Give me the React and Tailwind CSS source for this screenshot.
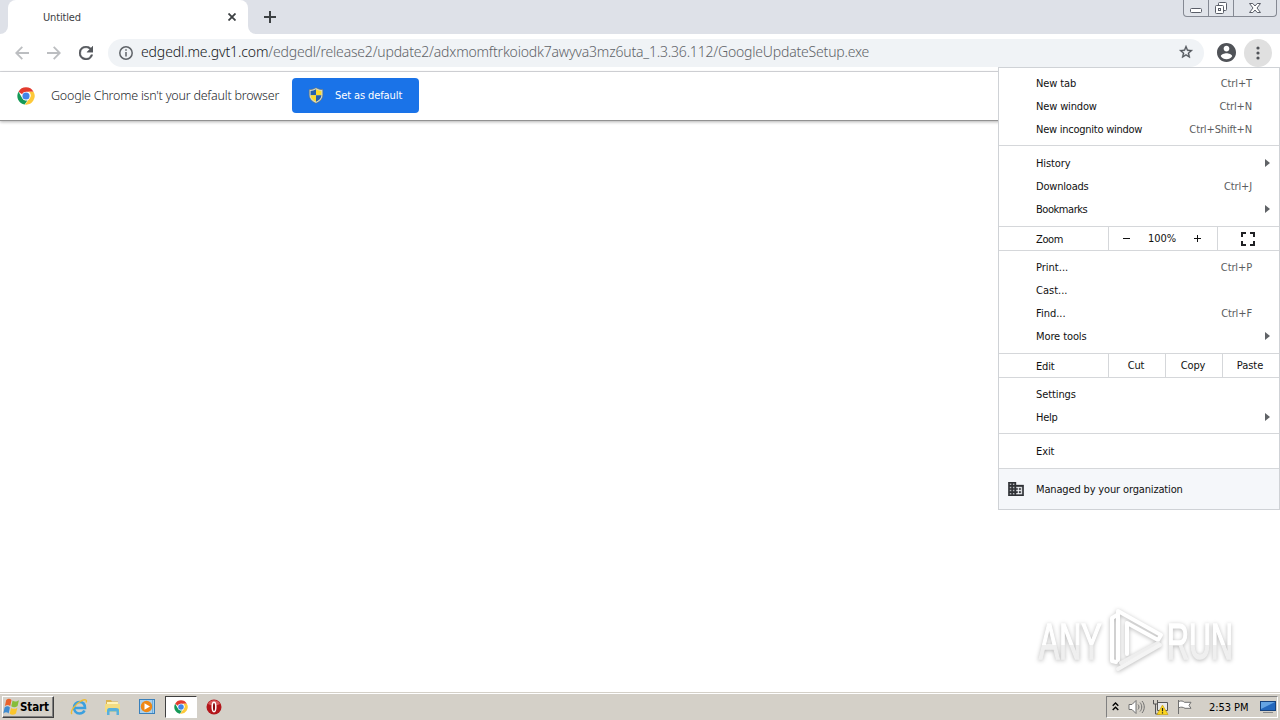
import React from 'react';

const Divider = () => <div className="h-px shrink-0 bg-[#d5d7da]" />;

const MenuItem = ({ label, shortcut, submenu, spacing = 'tracking-[-0.25px]' }) => (
  <div className="flex h-[23px] items-center pl-[37px] pr-[9px]">
    <span className={`flex-1 text-[#111] ${spacing}`}>{label}</span>
    {shortcut && <span className="mr-[18px] tracking-[-0.12px] text-[#5b5d60]">{shortcut}</span>}
    {submenu && (
      <svg className="mb-px" width="5" height="8" viewBox="0 0 5 8" fill="#606367">
        <path d="M0 0 5 4 0 8z" />
      </svg>
    )}
  </div>
);

const ChromeLogo = ({ size }) => (
  <svg width={size} height={size} viewBox="0 0 48 48">
    <circle cx="24" cy="24" r="23" fill="#fff" />
    <path d="M4 12.500A23 23 0 0 1 44 12.500H24a11.500 11.500 0 0 0-10.500 7z" fill="#e33b2e" />
    <path d="M4 12.500 14 30a11.500 11.500 0 0 0 14 5l-7.500 11.800A23 23 0 0 1 4 12.500z" fill="#159957" />
    <path d="M44 12.500A23 23 0 0 1 21 46.800L34 30a11.500 11.500 0 0 0-3-17.500z" fill="#fdc93a" />
    <circle cx="24" cy="24" r="11" fill="#fff" />
    <circle cx="24" cy="24" r="9.500" fill="#4285e8" />
  </svg>
);

const ShieldIcon = () => (
  <svg width="16" height="17" viewBox="0 0 16 17">
    <path d="M8 .7C6 2 3.500 2.600 1.200 2.600v5.200c0 4 3 7 6.800 8.500 3.800-1.500 6.800-4.500 6.800-8.500V2.600C12.500 2.600 10 2 8 .7z" fill="#d8dcc8" stroke="#696f66" strokeWidth=".6" />
    <path d="M8 2.300C6.300 3.300 4.500 3.800 2.600 4v4.200H8z" fill="#245fae" />
    <path d="M8 2.300c1.700 1 3.500 1.500 5.400 1.700v4.200H8z" fill="#fad92f" />
    <path d="M2.600 8.200H8v6.500c-3-1.300-5.200-3.400-5.400-6.500z" fill="#fad92f" />
    <path d="M13.400 8.200H8v6.500c3-1.300 5.200-3.400 5.400-6.500z" fill="#245fae" />
  </svg>
);

const TabStrip = () => (
  <div className="flex h-[34px] items-start bg-[#dee1e8]">
    <div className="h-[34px] w-2 bg-white">
      <div className="h-full rounded-br-lg bg-[#dee1e8]" />
    </div>
    <div className="flex h-[34px] w-[240px] items-center rounded-t-lg bg-white pl-[35px] pr-3">
      <span className="flex-1 pt-0.5 text-[11px] tracking-[-0.17px] text-[#3c4043]">Untitled</span>
      <svg width="8" height="8" viewBox="0 0 8 8" stroke="#3c4043" strokeWidth="1.800">
        <path d="M.5.5l7 7M7.500.5l-7 7" />
      </svg>
    </div>
    <div className="h-[34px] w-2 bg-white">
      <div className="h-full rounded-bl-lg bg-[#dee1e8]" />
    </div>
    <svg className="ml-[7px] mt-[10px]" width="14" height="14" viewBox="0 0 14 14" stroke="#3c4043" strokeWidth="2">
      <path d="M7 1v12M1 7h12" />
    </svg>
    <div className="ml-auto mr-[3px] flex h-[17px] w-[94px] rounded-b-[4px] border border-t-0 border-[#858993] bg-[#e1e4ea]">
      <div className="flex w-[25px] justify-center border-r border-[#858993]">
        <svg width="24" height="16" viewBox="0 0 24 16" fill="#fff" stroke="#5a5e68">
          <rect x="6.500" y="8.500" width="11" height="4" rx="1" />
        </svg>
      </div>
      <div className="flex w-[25px] justify-center border-r border-[#858993]">
        <svg width="24" height="16" viewBox="0 0 24 16" fill="#fff" stroke="#5a5e68">
          <rect x="9.500" y="2.500" width="8" height="8" rx="1" />
          <rect x="6.500" y="5.500" width="8" height="8" rx="1" />
          <rect x="9.500" y="8.500" width="2" height="2" />
        </svg>
      </div>
      <div className="flex flex-1 justify-center">
        <svg width="24" height="16" viewBox="0 0 24 16" fill="#fff" stroke="#5a5e68">
          <path d="M6.500 3.500h3.300L12 6l2.200-2.500h3.300L14 8l3.500 4.500h-3.300L12 10l-2.200 2.500H6.500L10 8z" />
        </svg>
      </div>
    </div>
  </div>
);

const Toolbar = () => (
  <div className="flex h-[38px] items-center border-b border-[#d8dade] bg-white pl-[15px] pr-2">
    <svg width="14" height="14" viewBox="0 0 14 14" fill="none" stroke="#bcbec1" strokeWidth="1.800">
      <path d="M14 7H1.500M7.300.8 1.200 7l6.100 6.200" />
    </svg>
    <svg className="ml-[18px]" width="14" height="14" viewBox="0 0 14 14" fill="none" stroke="#bcbec1" strokeWidth="1.800">
      <path d="M0 7h12.500M6.700.8 12.800 7l-6.100 6.200" />
    </svg>
    <svg className="ml-[18px]" width="14" height="14" viewBox="4 4 16 16" fill="#55585d" stroke="#55585d" strokeWidth=".5">
      <path d="M17.650 6.350A7.950 7.950 0 0 0 12 4a8 8 0 1 0 7.730 10h-2.080A6 6 0 1 1 12 6c1.660 0 3.140.69 4.220 1.780L13 11h7V4z" />
    </svg>
    <div className="ml-[15px] flex h-7 w-[1096px] items-center rounded-full bg-[#f0f3f6] pl-[11px] pr-[10px]">
      <svg width="14" height="14" viewBox="0 0 14 14" fill="none" stroke="#5f6368" strokeWidth="1.500">
        <circle cx="7" cy="7" r="6.200" />
        <path d="M7 6v4.500M7 3.300v1.500" />
      </svg>
      <span className="ml-2 flex-1 whitespace-nowrap pb-0.5 font-['Noto_Sans','Open_Sans',sans-serif] text-[14px] font-light text-[#5f6368]">
        <span className="tracking-[-0.12px] text-[#15181b]">edgedl.me.gvt1.com</span>
        <span className="tracking-[-0.19px]">/edgedl/release2/update2/adxmomftrkoiodk7awyva3mz6uta_1.3.36.112/GoogleUpdateSetup.exe</span>
      </span>
      <svg className="mb-0.5" width="16" height="16" viewBox="0 0 24 24" fill="#50545a" stroke="#50545a" strokeWidth=".5">
        <path d="M22 9.240l-7.190-.62L12 2 9.190 8.630 2 9.240l5.460 4.730L5.820 21 12 17.270 18.180 21l-1.630-7.030L22 9.240zM12 15.400l-3.760 2.270 1-4.280-3.320-2.880 4.380-.38L12 6.100l1.710 4.040 4.380.38-3.320 2.880 1 4.280L12 15.400z" />
      </svg>
    </div>
    <svg className="ml-[12.5px]" width="19" height="19" viewBox="2 2 20 20" fill="#505358">
      <path d="M12 2C6.480 2 2 6.480 2 12s4.480 10 10 10 10-4.480 10-10S17.520 2 12 2zm0 3c1.660 0 3 1.340 3 3s-1.340 3-3 3-3-1.340-3-3 1.340-3 3-3zm0 14.200c-2.500 0-4.710-1.280-6-3.220.03-1.990 4-3.080 6-3.080s5.970 1.090 6 3.080c-1.290 1.940-3.500 3.220-6 3.220z" />
    </svg>
    <div className="ml-[8.5px] flex size-7 items-center justify-center rounded-full bg-[#e0e0e0]">
      <svg width="4" height="14" viewBox="0 0 4 14" fill="#505358">
        <circle cx="2" cy="2" r="1.600" />
        <circle cx="2" cy="7" r="1.600" />
        <circle cx="2" cy="12" r="1.600" />
      </svg>
    </div>
  </div>
);

const InfoBar = () => (
  <div className="flex h-[49px] items-center border-b border-[#929292] bg-white pb-px pl-[17px] shadow-[0_1px_3px_rgba(0,0,0,0.3)]">
    <ChromeLogo size={18} />
    <span className="ml-4 w-[241px] whitespace-nowrap pt-0.5 font-['Noto_Sans','Open_Sans',sans-serif] text-[12.5px] font-light tracking-[-0.22px] text-[#25282b]">
      Google Chrome isn't your default browser
    </span>
    <button className="flex h-[35px] w-[127px] items-center rounded-[4px] bg-[#1a73e8] pl-4 text-[11px] tracking-[-0.1px] text-white">
      <ShieldIcon />
      <span className="ml-[11px] whitespace-nowrap pt-0.5">Set as default</span>
    </button>
  </div>
);

const ChromeMenu = () => (
  <div className="absolute left-[998px] top-[67px] flex h-[443px] w-[282px] flex-col border border-[#cfd2d6] bg-white text-[11px] leading-none">
    <div className="pb-1 pt-1">
      <MenuItem label="New tab" shortcut="Ctrl+T" spacing="tracking-[-0.1px]" />
      <MenuItem label="New window" shortcut="Ctrl+N" spacing="tracking-[-0.15px]" />
      <MenuItem label="New incognito window" shortcut="Ctrl+Shift+N" />
    </div>
    <Divider />
    <div className="pb-[5px] pt-[6px]">
      <MenuItem label="History" submenu spacing="tracking-[-0.1px]" />
      <MenuItem label="Downloads" shortcut="Ctrl+J" spacing="tracking-[-0.2px]" />
      <MenuItem label="Bookmarks" submenu spacing="tracking-[-0.45px]" />
    </div>
    <Divider />
    <div className="flex h-[23px] items-stretch text-[#111]">
      <div className="flex w-[109px] items-center pl-[37px] pt-0.5 tracking-[-0.4px]">Zoom</div>
      <div className="flex w-[109px] items-center border-l border-[#d5d7da] pl-[14px]">
        <svg width="8" height="8" viewBox="0 0 8 8" stroke="#111">
          <path d="M0 3.500h7" />
        </svg>
        <span className="w-[62px] text-center tracking-[-0.1px]">100%</span>
        <svg width="9" height="8" viewBox="0 0 9 8" stroke="#111">
          <path d="M1 3.500h7M4.500 0v7" />
        </svg>
      </div>
      <div className="flex flex-1 items-center justify-center border-l border-[#d5d7da] pr-0.5">
        <svg width="14" height="14" viewBox="0 0 14 14" fill="none" stroke="#202124" strokeWidth="2">
          <path d="M1 5V1h4M9 1h4v4M13 9v4H9M5 13H1V9" />
        </svg>
      </div>
    </div>
    <Divider />
    <div className="pb-[5px] pt-[5px]">
      <MenuItem label="Print..." shortcut="Ctrl+P" spacing="tracking-[0px]" />
      <MenuItem label="Cast..." spacing="tracking-[0px]" />
      <MenuItem label="Find..." shortcut="Ctrl+F" spacing="tracking-[0px]" />
      <MenuItem label="More tools" submenu spacing="tracking-[-0.1px]" />
    </div>
    <Divider />
    <div className="flex h-[23px] tracking-[-0.2px] text-[#111]">
      <div className="flex w-[109px] items-center pl-[37px] pt-0.5">Edit</div>
      <div className="flex w-[57px] items-center justify-center border-l border-[#d5d7da] pr-0.5">Cut</div>
      <div className="flex w-[57px] items-center justify-center border-l border-[#d5d7da] pr-0.5">Copy</div>
      <div className="flex flex-1 items-center justify-center border-l border-[#d5d7da] pr-0.5 tracking-[0px]">Paste</div>
    </div>
    <Divider />
    <div className="pb-1 pt-[5px]">
      <MenuItem label="Settings" spacing="tracking-[-0.1px]" />
      <MenuItem label="Help" submenu />
    </div>
    <Divider />
    <div className="pb-[5px] pt-[6px]">
      <MenuItem label="Exit" spacing="tracking-[-0.1px]" />
    </div>
    <Divider />
    <div className="flex flex-1 items-center bg-[#f5f7fa] pl-[9px] text-[#111]">
      <svg width="16" height="14" viewBox="2 3 20 18" fill="#303236" stroke="#303236" strokeWidth=".5">
        <path d="M12 7V3H2v18h20V7H12zM6 19H4v-2h2v2zm0-4H4v-2h2v2zm0-4H4V9h2v2zm0-4H4V5h2v2zm4 12H8v-2h2v2zm0-4H8v-2h2v2zm0-4H8V9h2v2zm0-4H8V5h2v2zm10 12h-8v-2h2v-2h-2v-2h2v-2h-2V9h8v10zm-2-8h-2v2h2v-2zm0 4h-2v2h2v-2z" />
      </svg>
      <span className="ml-3 tracking-[-0.15px]">Managed by your organization</span>
    </div>
  </div>
);

const Watermark = () => (
  <svg className="absolute left-[1030px] top-[600px] [filter:drop-shadow(0_1px_2px_rgba(0,0,0,0.28))]" width="240" height="84" viewBox="-4 -4 240 84">
    <defs>
      <linearGradient id="fade" x1="0" y1="0" x2="0" y2="1">
        <stop offset="0.55" stopColor="#fff" />
        <stop offset="0.55" stopColor="#efefef" />
      </linearGradient>
    </defs>
    <g fill="url(#fade)" stroke="url(#fade)" strokeWidth="1.500" fontFamily="Liberation Sans, sans-serif" fontSize="50">
      <text transform="translate(5 55) scale(0.61 1)">ANY</text>
      <text transform="translate(133 55) scale(0.61 1)">RUN</text>
    </g>
    <g fill="none" stroke="#fff" strokeWidth="4" strokeLinejoin="round" strokeLinecap="round">
      <path d="M83 11l-5 3v43l4 1" />
      <path d="M84 56V7l43 24-3 5-31-17v31" />
      <path d="M87 59l37-20" stroke="#eee" />
      <path d="M84 65l42-24" stroke="#f4f4f4" />
    </g>
  </svg>
);

const StartButton = () => (
  <div className="flex h-[22px] w-[52px] items-center border border-b-[#404040] border-l-white border-r-[#404040] border-t-white bg-[#d4d0c8] shadow-[inset_-1px_-1px_0_#808080]">
    <svg width="17" height="18" viewBox="0 1 16 14" preserveAspectRatio="none">
      <path d="M3 2.500c2-1.300 3.500-1 5 0L6.800 7.200c-1.500-1-3-1.200-5 0z" fill="#e9622b" />
      <path d="M9 3c2 1 3.500 1 6-.3L13.700 7.300c-2 1.200-4 1.200-5.900.2z" fill="#86bd3b" />
      <path d="M1.500 8.300c2-1.200 3.500-1 5 0L5.300 13c-1.500-1-3-1.200-5 0z" fill="#3e8bd0" />
      <path d="M7.600 8.700c2 1 3.800 1 5.900-.2L12.200 13c-2 1.300-4 1.300-5.900.3z" fill="#fbc62c" />
    </svg>
    <span className="pt-0.5 text-[11.5px] font-bold leading-none tracking-[-0.1px] text-black">Start</span>
  </div>
);

const Taskbar = () => (
  <div className="flex h-[28px] items-center border-t border-[#d4d0c8] bg-[#d4d0c8] pl-0.5 pt-px shadow-[inset_0_1px_0_#fff]">
    <StartButton />
    <svg className="ml-4" width="18" height="18" viewBox="0 0 18 18" fill="none">
      <path d="M14.500 12.500c-1 2-3 3-5 3-3.500 0-5.500-2.700-5.500-5.800C4 6.500 6.300 4 9.500 4 13 4 15 6.300 15 10H5" stroke="#3ba0df" strokeWidth="2.600" />
      <path d="M2 16C-.5 13.500 5.500 6 11 3c4-2 6.500-1.500 5 1.500" stroke="#eebc35" strokeWidth="1.400" />
    </svg>
    <svg className="ml-[16px]" width="18" height="18" viewBox="0 0 18 18">
      <path d="M2 2h5l1 1.500h6V14H2z" fill="#dcb450" />
      <path d="M3 4h11v3H3z" fill="#fff3b8" />
      <path d="M1 6h15v8H1z" fill="#f3dc82" />
      <path d="M3 17v-4.500C3 10.500 4.500 10 6 10h6c2 0 3 .7 3 2.500V17h-2.500v-3.500h-7V17z" fill="#57b0dc" />
    </svg>
    <svg className="ml-[16px]" width="18" height="18" viewBox="0 0 18 18">
      <rect x="1.500" y="1.500" width="15" height="14" fill="#a9d1ee" stroke="#3980bb" />
      <path d="M14.500 2v13" stroke="#6faedb" />
      <circle cx="8.500" cy="8.500" r="5.700" fill="#ef8815" />
      <path d="M6.500 5.300 12 8.500l-5.500 3.200z" fill="#fff" />
    </svg>
    <div className="ml-[9px] flex h-[22px] w-[32px] items-center justify-center border border-b-white border-l-[#404040] border-r-white border-t-[#404040] bg-white">
      <ChromeLogo size={14} />
    </div>
    <svg className="ml-[9px]" width="16" height="16" viewBox="0 0 16 16">
      <circle cx="8" cy="8" r="7.500" fill="#b3161b" />
      <path d="M2 5C4 0 12 0 14 5c-4 2-8 2-12 0z" fill="#d9585a" />
      <ellipse cx="8" cy="8" rx="1.800" ry="4.700" fill="#8b0b10" stroke="#fff" strokeWidth="1.500" />
    </svg>
    <div className="ml-auto mr-0.5 flex h-[22px] w-[172px] items-center border border-b-white border-l-[#808080] border-r-white border-t-[#808080] pl-[5px]">
      <svg className="mb-0.5" width="7" height="9" viewBox="0 0 7 9" fill="none" stroke="#000" strokeWidth="1.400">
        <path d="M.7 3.700 3.500 1l2.800 2.700M.7 8l2.800-2.700L6.300 8" />
      </svg>
      <svg className="ml-[9px]" width="17" height="16" viewBox="0 0 17 16" fill="#fff" stroke="#707070">
        <path d="M1 5.500h3l4-4v13l-4-4H1z" />
        <path d="M10 5.500c1.300 1.500 1.300 3.500 0 5M12 3.500c2.300 2.500 2.300 6.500 0 9M14 2c3 3.500 3 8.500 0 12" fill="none" />
      </svg>
      <svg className="ml-[7px]" width="17" height="16" viewBox="0 0 17 16">
        <path d="M5.500 3.500h10v8h-10z" fill="#e9e9e9" stroke="#555" />
        <path d="M1.500 1v4h4V1M3.500 5v10H8" fill="none" stroke="#555" />
        <path d="M10.500 6 16 15.500H5z" fill="#fbd51f" stroke="#c49a00" strokeWidth=".6" />
        <path d="M10.500 9v3.300M10.500 13.300v1.200" stroke="#222" strokeWidth="1.200" />
      </svg>
      <svg className="ml-[7px]" width="17" height="16" viewBox="0 0 17 16" fill="#fff" stroke="#707070">
        <path d="M2.500 1v14M2.500 2.500c3-1 4.500-.5 6 .8h6.500l-2 3 2 3H9c-2-1.300-4-1.500-6.500-.5z" />
      </svg>
      <span className="ml-[16px] w-[42px] whitespace-nowrap pt-0.5 text-[11px] tracking-[-0.05px] text-black">2:53 PM</span>
      <svg className="ml-[9px]" width="16" height="14" viewBox="0 0 16 14">
        <rect x=".5" y="1.500" width="15" height="9" fill="#2468bd" stroke="#16427e" />
        <path d="M1 2h14L1 9z" fill="#65a4e4" />
        <path d="M3 12.500h10" stroke="#888" />
      </svg>
    </div>
  </div>
);

const App = () => (
  <div className="relative flex h-[720px] w-[1280px] flex-col overflow-hidden bg-white font-['DejaVu_Sans_Condensed','DejaVu_Sans',sans-serif] font-stretch-condensed">
    <TabStrip />
    <Toolbar />
    <InfoBar />
    <main className="flex-1" />
    <Taskbar />
    <ChromeMenu />
    <Watermark />
  </div>
);

export default App;
